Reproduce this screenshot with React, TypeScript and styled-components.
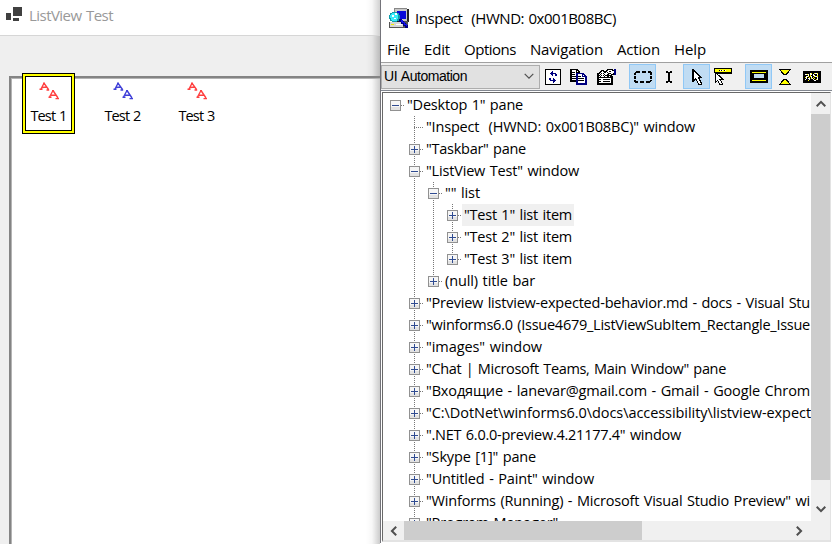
import React, { useLayoutEffect, useRef } from "react";
import styled, { createGlobalStyle } from "styled-components";

const GlobalStyle = createGlobalStyle`
  * { box-sizing: border-box; }
  body { margin: 0; overflow: hidden; background: #fff; }
`;

const UI_FONT = `"Open Sans", "Noto Sans", sans-serif`;

const Desktop = styled.div`
  display: grid;
  grid-template-columns: 380px 452px;
  width: 832px;
  height: 544px;
  overflow: hidden;
  font-family: ${UI_FONT};
  color: #000;
`;

/* ---------- text whose advance is tuned to a known width ---------- */

const Label = styled.span`
  display: inline-block;
  white-space: pre;
  word-spacing: 1px;
`;

function FitText({ text, width }: { text: string; width: number }) {
  const ref = useRef<HTMLSpanElement>(null);
  useLayoutEffect(() => {
    const el = ref.current;
    if (!el) return;
    el.style.letterSpacing = "0px";
    const natural = el.getBoundingClientRect().width;
    el.style.letterSpacing = `${(width - natural) / text.length}px`;
  }, [text, width]);
  return <Label ref={ref}>{text}</Label>;
}

/* ---------- ListView window ---------- */

const ListWindow = styled.section`
  display: flex;
  flex-direction: column;
  height: 544px;
  overflow: hidden;
  background: linear-gradient(to right, transparent 366px, rgba(0, 0, 0, 0.04) 372px, rgba(0, 0, 0, 0.22) 380px), #efefef;
`;

const ListTitle = styled.header`
  display: flex;
  gap: 6px;
  height: 36px;
  flex: none;
  padding: 7px 0 0 6px;
  border-bottom: 1px solid #d6d6d6;
  background: linear-gradient(to right, transparent 366px, rgba(0, 0, 0, 0.03) 372px, rgba(0, 0, 0, 0.18) 380px), #fff;
  color: #999;
  font-size: 15px;
  line-height: 17px;
`;

const ListBox = styled.div`
  display: flex;
  flex: 1;
  margin: 40px 0 0 9px;
  border: solid #848484;
  border-width: 2px 0 0 2px;
  box-shadow: inset 1px 1px 0 #b4b4b4;
  background: linear-gradient(to right, transparent 355px, rgba(0, 0, 0, 0.03) 361px, rgba(0, 0, 0, 0.2) 369px), #fff;
`;

const ListItem = styled.div<{ $focused?: boolean }>`
  display: flex;
  flex-direction: column;
  align-items: center;
  width: 53px;
  height: 61px;
  margin: -5px 21px 0 0;
  padding-top: 8px;
  font-size: 14.5px;
  line-height: 20px;
  background: ${(p) => (p.$focused ? "#fff" : "transparent")};
  box-shadow: ${(p) => (p.$focused ? "inset 0 0 0 1px #000, inset 0 0 0 3px #ff0, inset 0 0 0 4px #000" : "none")};
  svg { flex: none; margin-bottom: 5px; }
`;

const ListItems = styled.div`
  display: flex;
  padding-left: 11px;
`;

function FormsLogo() {
  return (
    <svg width="17" height="16" shapeRendering="crispEdges" fill="#404040">
      <rect x="7" y="0" width="9" height="9" />
      <rect x="0" y="6" width="5" height="7" />
      <rect x="7" y="11" width="6" height="3" />
    </svg>
  );
}

function LettersIcon({ color }: { color: string }) {
  return (
    <svg width="20" height="20" fill="none" stroke={color} strokeWidth="1.4">
      <path d="M5 2.2L2 8M5 2.2L9.5 8.5M3 6.5L7.5 6M0.5 8.3h3M7.5 9h2.7M4 2.2h2" />
      <path d="M14 9.5L10.5 16M14 9.5L19 17M12 14.3L17 14M9.5 16.2h3M16.5 17.6h3.5M13 9.8h2" />
    </svg>
  );
}

/* ---------- Inspect window ---------- */

const InspectWindow = styled.section`
  display: flex;
  flex-direction: column;
  height: 543px;
  border-left: 1px solid #74747a;
  background: #fff;
  overflow: hidden;
`;

const InspectTitle = styled.header`
  display: flex;
  gap: 5px;
  height: 38px;
  flex: none;
  padding: 8px 0 0 8px;
  font-size: 15px;
  line-height: 20px;
`;

const MenuBar = styled.nav`
  display: flex;
  gap: 14px;
  height: 24px;
  flex: none;
  padding-left: 6px;
  font-size: 15px;
  line-height: 22px;
`;

const Toolbar = styled.div`
  display: flex;
  align-items: center;
  height: 29px;
  flex: none;
  border-top: 1px solid #a0a0a0;
  border-bottom: 1px solid #828790;
  background: #f0f0f0;
`;

const Combo = styled.div`
  display: flex;
  align-items: center;
  justify-content: space-between;
  width: 159px;
  height: 24px;
  padding: 0 5px 1px 2px;
  border: 1px solid #adadad;
  background: #e1e1e1;
  font: 14px "Liberation Sans", Arial, sans-serif;
`;

const ToolButton = styled.span<{ $w: number; $ml?: number; $on?: boolean }>`
  display: flex;
  align-items: center;
  justify-content: center;
  width: ${(p) => p.$w}px;
  height: 25px;
  margin-left: ${(p) => p.$ml ?? 0}px;
  border: ${(p) => (p.$on ? "1px solid #90c8f6" : "0")};
  background: ${(p) => (p.$on ? "#c0dcf3" : "transparent")};
  svg { flex: none; }
`;

const PALETTE: Record<string, string> = {
  k: "#000000",
  w: "#ffffff",
  b: "#000080",
  y: "#ffff00",
};

function Bitmap({ rows }: { rows: string[] }) {
  const w = Math.max(...rows.map((r) => r.length));
  return (
    <svg width={w} height={rows.length} shapeRendering="crispEdges">
      {rows.flatMap((row, y) =>
        [...row].map((ch, x) =>
          PALETTE[ch] ? <rect key={`${x}-${y}`} x={x} y={y} width="1" height="1" fill={PALETTE[ch]} /> : null
        )
      )}
    </svg>
  );
}

const REFRESH = [
  "kkkkkkkkkkkkkkkk",
  "kwwwwwwwwwwwwwwk",
  "kwwwwwwbwwwwwwwk",
  "kwwwwwbbwwwwwwwk",
  "kwwwwbbbbbbwwwwk",
  "kwwwwwbbwwbbwwwk",
  "kwwwwwwbwwbbwwwk",
  "kwwwwwwwwwwwwwwk",
  "kwwwwwwwwwwwwwwk",
  "kwwwbbwwbwwwwwwk",
  "kwwwbbwwbbwwwwwk",
  "kwwwwbbbbbbwwwwk",
  "kwwwwwwwbbwwwwwk",
  "kwwwwwwwbwwwwwwk",
  "kwwwwwwwwwwwwwwk",
  "kkkkkkkkkkkkkkkk",
];

const COPY = [
  "kkkkkkkk",
  "kkwwwwkkk",
  "kkwwwwkwkk",
  "kkkkkwkkkk",
  "kkwwwwbbbbbbbb",
  "kkkkkwbbwwwwbbb",
  "kkwwwwbbwwwwbwbb",
  "kkkkkkbbkkkwbbbbb",
  "kkwwwwbbwwwwwwwbb",
  "kkkkkkbbkkkkkkwbb",
  "kkwwwwbbwwwwwwwbb",
  "kkkkkkbbkkkkkkwbb",
  "kkkkkkbbwwwwwwwbb",
  "......bbwwwwwwwbb",
  "......bbbbbbbbbbb",
  "......bbbbbbbbbbb",
];

const PROPERTIES = [
  "..........kkkkkk.bb",
  "....kkk..kkwwwwkkbb",
  "...kkwkkkkwwkkwwwbb",
  "..kkwwwkkwkwwwwwwbb",
  "kkkwkwkwwwwkkkwwkbb",
  "kkwkwwwkwwkkwwkkkbb",
  "kkkwkwkwkkkkkkk....",
  "kkwkwwwkwwkkwkkk...",
  "kkkkkkkkkkkkkkkk...",
  "kkwwwwwwwwwwwwkk...",
  "kkkkwwkkkkkkkwkk...",
  "kkwwwwwwwwwwwwkk...",
  "kkkkwwkkkkkkkwkk...",
  "kkwwwwwwwwwwwwkk...",
  "kkkkkkkkkkkkkkkk...",
  "kkkkkkkkkkkkkkkk...",
];

const MARQUEE = [
  "..kkkk..kkkk..kkk.",
  ".kkkkk..kkkk..kkkk",
  "kk..............kk",
  "kk..............kk",
  "..................",
  "kk..............kk",
  "kk..............kk",
  "kk..............kk",
  "..................",
  "kk..............kk",
  "kkkk..kkkk..kkkkk.",
  ".kkk..kkkk..kkkk..",
];

const IBEAM = ["kk..kk", "kkkkkk", "..kk..", "..kk..", "..kk..", "..kk..", "..kk..", "..kk..", "..kk..", "..kk..", "kkkkkk", "kk..kk"];

const POINTER = [
  "kk........",
  "kkk.......",
  "kkkk......",
  "kkwkk.....",
  "kkwwkk....",
  "kkwwwkk...",
  "kkwwwwkk..",
  "kkwwwwwkk.",
  "kkwwwwkkkk",
  "kkwkwwkk..",
  "kkkkkwwk..",
  "kkk.kwwkk.",
  "kk...kwwk.",
  ".....kwwkk",
  "......kwwk",
  "......kkkk",
];

const RULER_POINTER = [
  "kkkkkkkkkkkkkkkkkk",
  "kyyyyyyyyyyyyyyyyk",
  "kyyyykwkwykwyyyyyk",
  "kyyyyyyyyyyyyyyyyk",
  "kkkkkkkkkkkkkkkkkk",
  ".kkkkkkkkkkkkkkkkk",
  ".kwk..............",
  ".kwwkk............",
  ".kwwwkk...........",
  ".kwwwwkk..........",
  ".kwwwwwkk.........",
  ".kwwwkkkkk........",
  ".kwkwwk...........",
  ".kk.kwwk..........",
  ".k..kwwk..........",
  ".....kwwk.........",
  ".....kkkk.........",
];

const FRAME = [
  "kkkkkkkkkkkkkkkkkk",
  "kkkkkkkkkkkkkkkkkk",
  "kkyyyyyyyyyyyyyykk",
  "kkkkkkkkkkkkkkkkkk",
  "kkkk..........kkkk",
  "kkkk..........kkkk",
  "kkkk..........kkkk",
  "kkkk..........kkkk",
  "kkkkkkkkkkkkkkkkkk",
  "kkkkkkkkkkkkkkkkkk",
  "kkyyyyyyyyyyyyyykk",
  "kkkkkkkkkkkkkkkkkk",
  "kkkkkkkkkkkkkkkkkk",
];

const HOURGLASS = [
  "kkkkkkkkkkkk",
  ".kyyyyyyyyk.",
  "..kyyyyyyk..",
  "..kkyyyykk..",
  "...kkyykk...",
  "....kkkk....",
  "............",
  "............",
  "............",
  "............",
  "....kkkk....",
  "...kkyykk...",
  "..kkyyyykk..",
  "..kyyyyyyk..",
  ".kyyyyyyyyk.",
  "kkkkkkkkkkkk",
];

const CAPTION = [
  "kkkkkkkkkkkkkkkkkk",
  "kkkkkkkkkkkkkkkkkk",
  "kkkkkkkwykkywwykkk",
  "kkwwywkwwkwkkkwkkk",
  "kkkkkwkykkwwkkykkk",
  "kkkwwykywkkywwykkk",
  "kkywkkykwkykkkwkkk",
  "kkkwkwwkywkykkwkkk",
  "kkwkkkwkkkwkkywkkk",
  "kkkkkykkkkkwwkkkkk",
  "kkkkkkkkkkkkkkkkkk",
  "kkkkkkkkkkkkkkkkkk",
];

function InspectLogo() {
  return (
    <svg width="21" height="21" shapeRendering="crispEdges">
      <path d="M5 0h13v13H5z" fill="#c8c8c8" />
      <path d="M18 1h2v13h-2zM6 13h13v1H6z" fill="#222" />
      <path d="M5 0h13v1H5zM5 1h1v4H5z" fill="#888" />
      <path d="M8 3h9v8H8z" fill="#0808d8" />
      <path d="M0 14h14v5H0z" fill="#d6d6d6" />
      <path d="M0 14h1v6H0zM0 19h19v1H0zM14 13h5v7h-5z" fill="#555" />
      <path d="M2 16h3v1H2z" fill="#ee0" />
      <path d="M7 16h6v1H7z" fill="#fff" />
      <path d="M3 4h5v1h2v2h1v4h-1v2H8v1H3v-1H1v-2H0V7h1V5h2z" fill="#109cab" />
      <path d="M3 5h5v1h1v5H8v2H3v-1H2v-2H1V7h1V6h1z" fill="#38eafa" />
      <path d="M3 7h2v2H3zM6 5h2v2H6zM5 10h2v1H5z" fill="#fff" />
      <path d="M10 11h3v2h2v2h2v2h2v3h-3v-2h-2v-2h-2v-2h-2z" fill="#000080" />
      <path d="M12 12h2v2h2v2h2v2h-1v-1h-2v-2h-2z" fill="#1515ee" />
    </svg>
  );
}

function Chevron({ dir, size = 10, stroke = 2 }: { dir: "up" | "down" | "left" | "right"; size?: number; stroke?: number }) {
  const angle = { down: 0, left: 90, up: 180, right: 270 }[dir];
  return (
    <svg width={size} height={size} viewBox="0 0 10 10" fill="none" stroke="#505050" strokeWidth={stroke}>
      <path d="M0.7 2.8L5 7.1L9.3 2.8" transform={`rotate(${angle} 5 5)`} />
    </svg>
  );
}

/* ---------- tree ---------- */

const TreeFrame = styled.div`
  display: grid;
  grid-template-columns: 428px 19px;
  grid-template-rows: 428px 19px;
  flex: none;
  width: 449px;
  margin: 1px 0 0 1px;
  height: 450px;
  border: 1px solid #696969;
  border-right-color: #e3e3e3;
  border-bottom: 2px solid #e3e3e3;
`;

const TreeBody = styled.div`
  overflow: hidden;
  padding: 1px 0 0 3px;
`;

const TreeRow = styled.div`
  display: flex;
  height: 22px;
  font-size: 14.5px;
  line-height: 21px;
`;

type Line = "none" | "full" | "top";

const dotsV = "repeating-linear-gradient(to bottom, #777 0 1px, transparent 1px 2px)";
const dotsH = "repeating-linear-gradient(to right, #777 0 1px, transparent 1px 2px)";

const GuideCell = styled.span<{ $line: Line; $branch?: boolean }>`
  display: flex;
  flex: none;
  align-items: center;
  justify-content: center;
  width: 19px;
  height: 22px;
  padding-top: 1px;
  background-image: ${dotsV}, ${dotsH};
  background-repeat: no-repeat;
  background-position: 9px 0, 9px 11px;
  background-size: ${(p) => (p.$line === "none" ? "0 0" : p.$line === "top" ? "1px 12px" : "1px 22px")},
    ${(p) => (p.$branch ? "9px 1px" : "0 0")};
`;

const RowText = styled.span<{ $selected?: boolean }>`
  flex: none;
  height: 22px;
  padding: 0 2px;
  background: ${(p) => (p.$selected ? "#f0f0f0" : "transparent")};
`;

function Expander({ open }: { open: boolean }) {
  return (
    <svg width="11" height="11" shapeRendering="crispEdges">
      <rect x="0.5" y="0.5" width="10" height="10" fill="#f6f6f6" stroke="#919191" />
      <rect x="1" y="7" width="9" height="3" fill="#e2e2e2" />
      <path d={open ? "M2 5h7v1H2z" : "M2 5h7v1H2zM5 2h1v7H5z"} fill="#2f4b91" />
    </svg>
  );
}

interface Node {
  text: string;
  width: number;
  lines: Line[];
  state?: "open" | "closed";
  selected?: boolean;
}

const NODES: Node[] = [
  { text: '"Desktop 1" pane', width: 116, lines: ["none"], state: "open" },
  { text: '"Inspect  (HWND: 0x001B08BC)" window', width: 269, lines: ["none", "full"] },
  { text: '"Taskbar" pane', width: 100, lines: ["none", "full"], state: "closed" },
  { text: '"ListView Test" window', width: 153, lines: ["none", "full"], state: "open" },
  { text: '"" list', width: 35, lines: ["none", "full", "full"], state: "open" },
  { text: '"Test 1" list item', width: 108, lines: ["none", "full", "full", "full"], state: "closed", selected: true },
  { text: '"Test 2" list item', width: 108, lines: ["none", "full", "full", "full"], state: "closed" },
  { text: '"Test 3" list item', width: 108, lines: ["none", "full", "full", "top"], state: "closed" },
  { text: "(null) title bar", width: 90, lines: ["none", "full", "top"], state: "closed" },
  { text: '"Preview listview-expected-behavior.md - docs - Visual Stu', width: 384, lines: ["none", "full"], state: "closed" },
  { text: '"winforms6.0 (Issue4679_ListViewSubItem_Rectangle_Issue', width: 384, lines: ["none", "full"], state: "closed" },
  { text: '"images" window', width: 116, lines: ["none", "full"], state: "closed" },
  { text: '"Chat | Microsoft Teams, Main Window" pane', width: 300, lines: ["none", "full"], state: "closed" },
  { text: '"Входящие - lanevar@gmail.com - Gmail - Google Chrom', width: 384, lines: ["none", "full"], state: "closed" },
  { text: '"C:\\DotNet\\winforms6.0\\docs\\accessibility\\listview-expect', width: 385, lines: ["none", "full"], state: "closed" },
  { text: '".NET 6.0.0-preview.4.21177.4" window', width: 255, lines: ["none", "full"], state: "closed" },
  { text: '"Skype [1]" pane', width: 110, lines: ["none", "full"], state: "closed" },
  { text: '"Untitled - Paint" window', width: 168, lines: ["none", "full"], state: "closed" },
  { text: '"Winforms (Running) - Microsoft Visual Studio Preview" wi', width: 384, lines: ["none", "full"], state: "closed" },
  { text: '"Program Manager"', width: 132, lines: ["none", "top"], state: "closed" },
];

function TreeItem({ node }: { node: Node }) {
  const last = node.lines.length - 1;
  return (
    <TreeRow>
      {node.lines.map((line, i) => (
        <GuideCell key={i} $line={line} $branch={i === last}>
          {i === last && node.state && <Expander open={node.state === "open"} />}
        </GuideCell>
      ))}
      <RowText $selected={node.selected}>
        <FitText text={node.text} width={node.width} />
      </RowText>
    </TreeRow>
  );
}

const ScrollTrack = styled.div<{ $horizontal?: boolean }>`
  display: flex;
  flex-direction: ${(p) => (p.$horizontal ? "row" : "column")};
  background: #f0f0f0;
  ${(p) => (p.$horizontal ? "padding-left: 1px;" : "padding-top: 1px;")}
`;

const ScrollArrow = styled.span`
  display: flex;
  align-items: center;
  justify-content: center;
  flex: none;
  width: 20px;
  height: 19px;
`;

const ScrollThumb = styled.div<{ $w: number; $h: number; $after: number }>`
  flex: none;
  width: ${(p) => p.$w}px;
  height: ${(p) => p.$h}px;
  margin-right: ${(p) => p.$after}px;
  background: #cdcdcd;
`;

const VArrow = styled(ScrollArrow)<{ $mt?: number }>`
  width: 19px;
  height: 20px;
  margin-top: ${(p) => p.$mt ?? 0}px;
`;

const ScrollCorner = styled.div`
  background: #f0f0f0;
`;

export default function App() {
  return (
    <>
      <GlobalStyle />
      <Desktop>
        <ListWindow>
          <ListTitle>
            <FormsLogo />
            <FitText text="ListView Test" width={84} />
          </ListTitle>
          <ListBox>
            <ListItems>
              <ListItem $focused>
                <LettersIcon color="#ff4040" />
                <FitText text="Test 1" width={36} />
              </ListItem>
              <ListItem>
                <LettersIcon color="#4040d8" />
                <FitText text="Test 2" width={36} />
              </ListItem>
              <ListItem>
                <LettersIcon color="#ff4040" />
                <FitText text="Test 3" width={36} />
              </ListItem>
            </ListItems>
          </ListBox>
        </ListWindow>
        <InspectWindow>
          <InspectTitle>
            <InspectLogo />
            <FitText text="Inspect  (HWND: 0x001B08BC)" width={201} />
          </InspectTitle>
          <MenuBar>
            <FitText text="File" width={23} />
            <FitText text="Edit" width={26} />
            <FitText text="Options" width={52} />
            <FitText text="Navigation" width={73} />
            <FitText text="Action" width={43} />
            <FitText text="Help" width={32} />
          </MenuBar>
          <Toolbar>
            <Combo>
              <FitText text="UI Automation" width={83} />
              <Chevron dir="down" stroke={1.2} />
            </Combo>
            <ToolButton $w={16} $ml={5}><Bitmap rows={REFRESH} /></ToolButton>
            <ToolButton $w={17} $ml={9}><Bitmap rows={COPY} /></ToolButton>
            <ToolButton $w={19} $ml={10}><Bitmap rows={PROPERTIES} /></ToolButton>
            <ToolButton $w={27} $ml={13} $on><Bitmap rows={MARQUEE} /></ToolButton>
            <ToolButton $w={6} $ml={10}><Bitmap rows={IBEAM} /></ToolButton>
            <ToolButton $w={27} $ml={11} $on><Bitmap rows={POINTER} /></ToolButton>
            <ToolButton $w={18} $ml={4}><Bitmap rows={RULER_POINTER} /></ToolButton>
            <ToolButton $w={27} $ml={13} $on><Bitmap rows={FRAME} /></ToolButton>
            <ToolButton $w={12} $ml={7}><Bitmap rows={HOURGLASS} /></ToolButton>
            <ToolButton $w={18} $ml={12}><Bitmap rows={CAPTION} /></ToolButton>
          </Toolbar>
          <TreeFrame>
            <TreeBody>
              {NODES.map((n) => (
                <TreeItem key={n.text} node={n} />
              ))}
            </TreeBody>
            <ScrollTrack>
              <VArrow><Chevron dir="up" /></VArrow>
              <ScrollThumb $w={19} $h={366} $after={0} />
              <VArrow $mt={19}><Chevron dir="down" /></VArrow>
            </ScrollTrack>
            <ScrollTrack $horizontal>
              <ScrollArrow><Chevron dir="left" /></ScrollArrow>
              <ScrollThumb $w={238} $h={19} $after={147} />
              <ScrollArrow><Chevron dir="right" /></ScrollArrow>
            </ScrollTrack>
            <ScrollCorner />
          </TreeFrame>
        </InspectWindow>
      </Desktop>
    </>
  );
}
